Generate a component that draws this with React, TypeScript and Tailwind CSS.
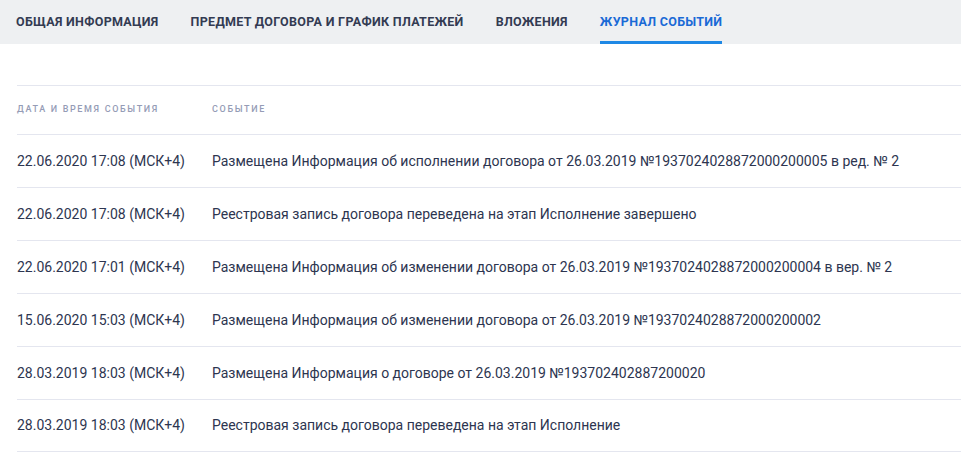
const tabs = [
  { label: "Общая информация", active: false },
  { label: "Предмет договора и график платежей", active: false },
  { label: "Вложения", active: false },
  { label: "Журнал событий", active: true },
];

const events = [
  {
    date: "22.06.2020 17:08 (МСК+4)",
    text: "Размещена Информация об исполнении договора от 26.03.2019 №1937024028872000200005 в ред. № 2",
  },
  {
    date: "22.06.2020 17:08 (МСК+4)",
    text: "Реестровая запись договора переведена на этап Исполнение завершено",
  },
  {
    date: "22.06.2020 17:01 (МСК+4)",
    text: "Размещена Информация об изменении договора от 26.03.2019 №1937024028872000200004 в вер. № 2",
  },
  {
    date: "15.06.2020 15:03 (МСК+4)",
    text: "Размещена Информация об изменении договора от 26.03.2019 №1937024028872000200002",
  },
  {
    date: "28.03.2019 18:03 (МСК+4)",
    text: "Размещена Информация о договоре от 26.03.2019 №193702402887200020",
  },
  {
    date: "28.03.2019 18:03 (МСК+4)",
    text: "Реестровая запись договора переведена на этап Исполнение",
  },
];

export default function App() {
  return (
    <div className="w-[961px] min-h-[468px] bg-white font-['Roboto',sans-serif]">
      <nav className="flex h-[44px] bg-[#eef0f2] pl-4 gap-8">
        {tabs.map((t) => (
          <div
            key={t.label}
            className={`flex items-center h-full text-[12.5px] font-bold uppercase tracking-[0.3px] border-b-[3px] pt-[3px] ${
              t.active
                ? "text-[#1a6ad6] border-[#1e88e5]"
                : "text-[#333b52] border-transparent"
            }`}
          >
            {t.label}
          </div>
        ))}
      </nav>

      <div className="pt-[41px] pl-[17px]">
        <div className="flex h-[49px] items-center border-t border-[#e4e6ef] text-[9px] uppercase tracking-[1.65px] text-[#959cb6] font-medium">
          <div className="w-[195px]">Дата и время события</div>
          <div>Событие</div>
        </div>
        {events.map((e, i) => (
          <div
            key={i}
            className="flex h-[53px] items-center border-t border-b-0 border-[#e4e6ef] last:border-b text-[14px] text-[#2d3550]"
          >
            <div className="w-[195px]">{e.date}</div>
            <div>{e.text}</div>
          </div>
        ))}
      </div>
    </div>
  );
}
